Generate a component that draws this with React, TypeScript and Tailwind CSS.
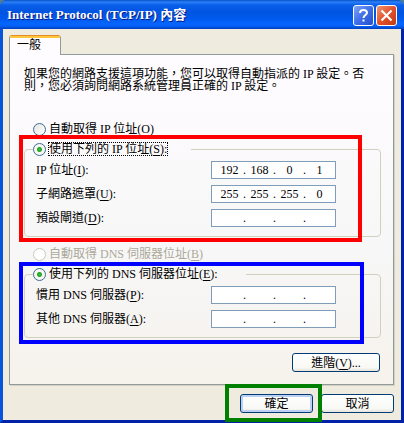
import React from 'react';

type AddressRow = {
  id: string;
  label: string;
  hotkey: string;
  octets: string[];
};

const ipRows: AddressRow[] = [
  { id: 'ip', label: 'IP 位址', hotkey: 'I', octets: ['192', '168', '0', '1'] },
  { id: 'mask', label: '子網路遮罩', hotkey: 'U', octets: ['255', '255', '255', '0'] },
  { id: 'gateway', label: '預設閘道', hotkey: 'D', octets: ['', '', '', ''] },
];

const dnsRows: AddressRow[] = [
  { id: 'dns1', label: '慣用 DNS 伺服器', hotkey: 'P', octets: ['', '', '', ''] },
  { id: 'dns2', label: '其他 DNS 伺服器', hotkey: 'A', octets: ['', '', '', ''] },
];

const radioClass =
  'h-[13px] w-[13px] shrink-0 appearance-none rounded-full border border-[#3f6c94] bg-[linear-gradient(135deg,#e4e4df,#ffffff)] outline-none checked:bg-[radial-gradient(circle,#3cc83c_0,#21a121_2px,#f6f6f3_3px)] disabled:border-[#cac8bb] disabled:bg-white disabled:bg-none';

const buttonClass =
  'h-[19px] rounded-[3px] border border-[#003c74] bg-linear-to-b from-white via-[#f8f8f5] via-80% to-[#e6e3da] text-center leading-4';

const Hotkey: React.FC<{ letter: string }> = ({ letter }) => (
  <>
    (<u className="underline-offset-2">{letter}</u>)
  </>
);

const AddressFields: React.FC<{ rows: AddressRow[] }> = ({ rows }) => (
  <div className="flex flex-col gap-1.5 pt-[5px] pr-11 pb-[9px] pl-[11px]">
    {rows.map((row) => (
      <div key={row.id} className="flex h-[18px] items-center justify-between">
        <label htmlFor={`${row.id}-0`}>
          {row.label}
          <Hotkey letter={row.hotkey} />:
        </label>
        <div className="flex h-[18px] w-[125px] items-center border border-[#7f9db9] bg-white pl-1">
          {row.octets.map((octet, i) => (
            <React.Fragment key={i}>
              {i > 0 && <span className="w-[3px] leading-4">.</span>}
              <input
                id={`${row.id}-${i}`}
                type="text"
                maxLength={3}
                defaultValue={octet}
                aria-label={i > 0 ? `${row.label} ${i + 1}` : undefined}
                className="h-4 w-[27px] bg-transparent text-center leading-4 outline-none"
              />
            </React.Fragment>
          ))}
        </div>
      </div>
    ))}
  </div>
);

const TitleBar: React.FC = () => (
  <header className="flex h-[29px] items-center justify-between rounded-t-[7px] bg-[linear-gradient(to_bottom,#0a4fc4_0,#2a80f8_2px,#0a5fea_5px,#0054e0_12px,#0058ec_18px,#0566ff_24px,#0560f5_26px,#0040c0_29px)] pr-[7px] pl-[7px]">
    <h1 className="text-[13px] leading-4 font-bold text-white [text-shadow:1px_1px_0_#0a1883]">
      Internet Protocol (TCP/IP) 內容
    </h1>
    <div className="flex gap-0.5 pt-0.5">
      <button
        aria-label="Help"
        className="flex h-[21px] w-[21px] items-center justify-center rounded-[3px] border border-white bg-linear-to-br from-[#7fa3f5] via-[#3f6fe8] to-[#2450cf]"
      >
        <svg width="13" height="15" viewBox="0 0 13 15" fill="none" stroke="white" strokeWidth="2">
          <path d="M3 5C3 2.8 4.3 2 6.5 2S10 3 10 4.8C10 7 6.5 7 6.5 10" />
          <path d="M6.5 11.5V13.5" />
        </svg>
      </button>
      <button
        aria-label="Close"
        className="flex h-[21px] w-[21px] items-center justify-center rounded-[3px] border border-white bg-linear-to-br from-[#f0936f] via-[#e2512b] to-[#c03a10]"
      >
        <svg width="13" height="13" viewBox="0 0 13 13" fill="none" stroke="white" strokeWidth="2.2">
          <path d="M1.5 1.5L11.5 11.5M11.5 1.5L1.5 11.5" />
        </svg>
      </button>
    </div>
  </header>
);

const App: React.FC = () => {
  return (
    <div className="bg-[#4f7f96] font-['Liberation_Serif','Noto_Sans_CJK_TC',serif] text-xs leading-3 text-black">
      <div className="overflow-hidden rounded-t-[7px] bg-[#0046d5]">
        <TitleBar />

        <main className="border-r-[3px] border-b-[3px] border-l-[3px] border-t-0 border-l-[#0855dd] border-r-[#0022a8] border-b-[#0022a8] bg-[#efebde] pt-1.5 pr-[7px] pb-[7px] pl-1.5">
          {/* Tab strip */}
          <div role="tablist" className="flex">
            <button
              role="tab"
              aria-selected="true"
              className="relative z-10 -mb-px flex h-5 w-[52px] flex-col overflow-hidden rounded-t-[3px] border-x border-[#919b9c] bg-[#fefcff] text-left"
            >
              <span className="h-[3px] w-full shrink-0 border-t border-[#e68b2c] bg-[#ffc73c]" />
              <span className="pl-[7px] leading-[14px]">一般</span>
            </button>
          </div>

          <section className="border border-[#919b9c] bg-linear-to-b from-[#fffcff] via-[#f7f7f7] via-60% to-[#f6f2ec] pt-[13px] pr-3 pb-3 pl-3.5 shadow-[1px_1px_0_#d5d1c2]">
            <p className="pr-4">如果您的網路支援這項功能，您可以取得自動指派的 IP 設定。否則，您必須詢問網路系統管理員正確的 IP 設定。</p>

            <label className="mt-[30px] ml-[9px] flex h-3.5 items-center gap-[3px]">
              <input type="radio" name="address" className={radioClass} />
              <span>
                自動取得 IP 位址
                <Hotkey letter="O" />
              </span>
            </label>

            <div className="relative mt-1.5">
              <fieldset className="rounded-[4px] border border-[#d0d0bf]">
                <legend className="ml-2 pr-6">
                  <label className="flex h-3.5 items-center gap-[3px]">
                    <input type="radio" name="address" defaultChecked className={radioClass} />
                    <span className="outline-1 outline-black outline-dotted">
                      使用下列的 IP 位址
                      <Hotkey letter="S" />:
                    </span>
                  </label>
                </legend>
                <AddressFields rows={ipRows} />
              </fieldset>
              <div className="pointer-events-none absolute -top-[7px] right-[19px] -bottom-[5px] -left-[5px] border-4 border-[#ff0000]" />
            </div>

            <label className="mt-2.5 ml-[9px] flex h-3.5 items-center gap-[3px] text-[#aca899]">
              <input type="radio" name="dns" disabled className={radioClass} />
              <span>
                自動取得 DNS 伺服器位址
                <Hotkey letter="B" />
              </span>
            </label>

            <div className="relative mt-1.5">
              <fieldset className="rounded-[4px] border border-[#d0d0bf]">
                <legend className="ml-2 pr-7">
                  <label className="flex h-3.5 items-center gap-[3px]">
                    <input type="radio" name="dns" defaultChecked className={radioClass} />
                    <span>
                      使用下列的 DNS 伺服器位址
                      <Hotkey letter="E" />:
                    </span>
                  </label>
                </legend>
                <AddressFields rows={dnsRows} />
              </fieldset>
              <div className="pointer-events-none absolute -top-[5px] right-[17px] -bottom-[6px] -left-[5px] border-4 border-[#0000ff]" />
            </div>

            <div className="mt-[15px] flex justify-end pr-px">
              <button className={`${buttonClass} w-[88px]`}>
                進階
                <Hotkey letter="V" />
                ...
              </button>
            </div>
          </section>

          {/* Dialog buttons */}
          <div className="mt-[9px] flex justify-end gap-2">
            <div className="relative">
              <button className={`${buttonClass} w-[73px] shadow-[inset_0_0_0_2px_#bcd0f4]`}>確定</button>
              <div className="pointer-events-none absolute -top-2.5 -right-[9px] -bottom-[9px] -left-[15px] border-4 border-[#008000]" />
            </div>
            <button className={`${buttonClass} w-[73px]`}>取消</button>
          </div>
        </main>
      </div>
    </div>
  );
};

export default App;
